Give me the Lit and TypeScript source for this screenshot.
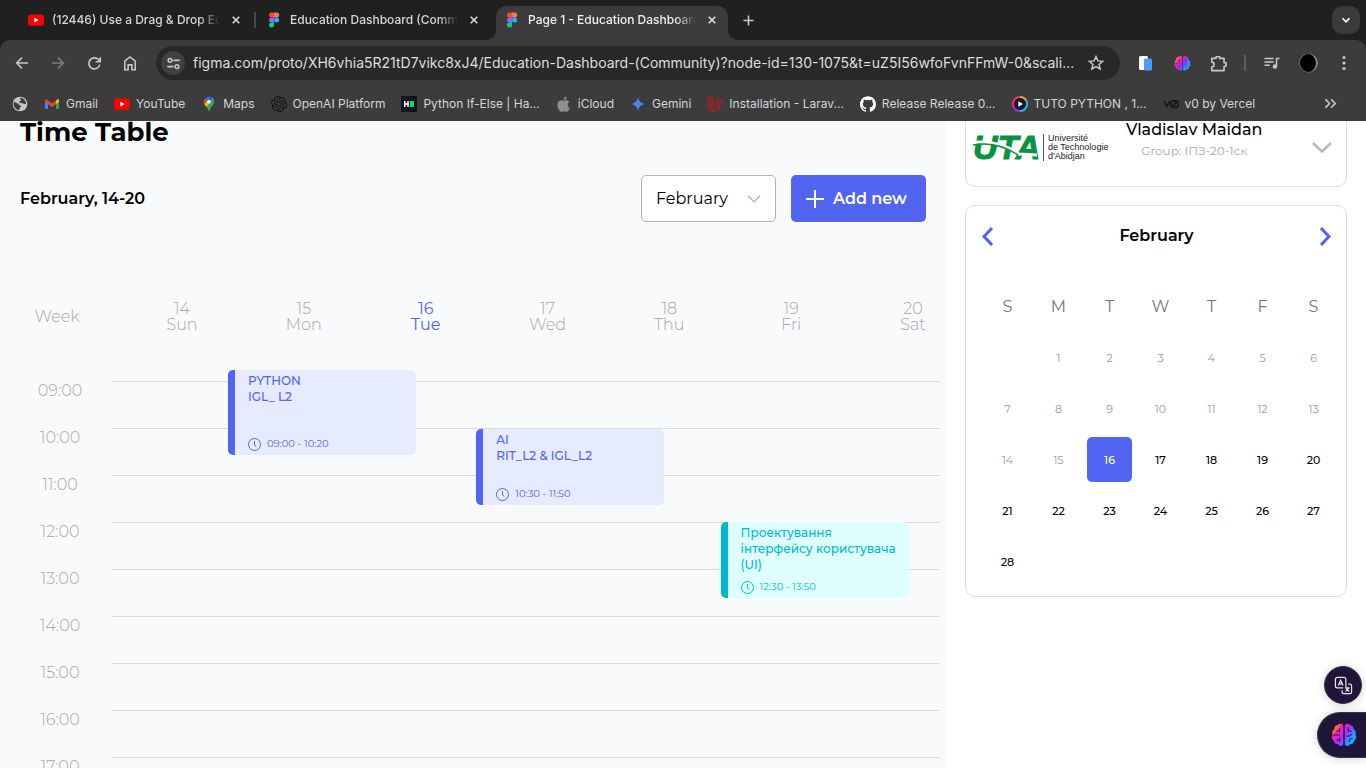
import { LitElement, html, svg, css, nothing } from "lit";
import { customElement, state } from "lit/decorators.js";
import { classMap } from "lit/directives/class-map.js";
import { styleMap } from "lit/directives/style-map.js";

const youtube = html`<svg viewBox="0 0 16 16" width="16" height="16" aria-hidden="true"><rect y="2.4" width="16" height="11.4" rx="2.6" fill="#f00"/><path d="M6.4 5.7v4.7L10.6 8z" fill="#fff"/></svg>`;
const figma = html`<svg viewBox="0 0 16 16" width="16" height="16" aria-hidden="true"><path d="M5.5.6H8v5H5.5a2.5 2.5 0 0 1 0-5z" fill="#f24e1e"/><path d="M8 .6h2.7a2.5 2.5 0 0 1 0 5H8z" fill="#ff7262"/><path d="M5.5 5.6H8v5H5.5a2.5 2.5 0 0 1 0-5z" fill="#a259ff"/><circle cx="10.6" cy="8.1" r="2.5" fill="#1abcfe"/><path d="M5.5 10.6H8v2.5a2.5 2.5 0 1 1-2.5-2.5z" fill="#0acf83"/></svg>`;
const globe = html`<svg viewBox="0 0 24 24" width="16" height="16" aria-hidden="true"><circle cx="12" cy="12" r="11" fill="#c4c7cb"/><path d="M3 8.500c2 .2 2.800 2 5 2.300s2 2.500 4 3.200 1.500 2.500.2 3.500-.5 3-2 4A10 10 0 0 1 3 8.500zM12 2.500c-.5 2.500 2 2.500 1.500 4.300s-3 .8-3 2.600 3.500.9 5 1.600 3.500 2 5.500.8A9.500 9.500 0 0 0 12 2.500z" fill="#3c3c3c"/></svg>`;
const gmail = html`<svg viewBox="0 0 16 16" width="16" height="16" aria-hidden="true"><path d="M1 5v8h3V7z" fill="#4285f4"/><path d="M15 5v8h-3V7z" fill="#34a853"/><path d="M12 4.500 14 3c.5-.2 1 .2 1 1v2l-3 2.300z" fill="#fbbc04"/><path d="M1 6V4c0-.8.7-1.200 1.300-.8L8 7.300l4-3v4L8 11 4 8.200z" fill="#ea4335"/></svg>`;
const maps = html`<svg viewBox="0 0 16 16" width="16" height="16" aria-hidden="true"><path d="M8 .5a5.200 5.200 0 0 0-4 1.900l3 2.600L11 1.400A5.200 5.200 0 0 0 8 .5z" fill="#1a73e8"/><path d="M4 2.400a5.200 5.200 0 0 0-.7 5.600L6.900 5z" fill="#ea4335"/><path d="M11 1.300c1 .6 1.700 1.500 2 2.600L7 11 3.900 8.900 9.500 5z" fill="#4285f4"/><path d="M3.300 8c.5 1 1.300 1.900 2 2.900L9.700 6 6.500 4.900z" fill="#fbbc04"/><path d="M13 3.900c.6 2 .1 3.600-1.100 5.200-1.400 1.900-2.700 3-3.200 5.500-.2 1.100-1 1.100-1.300 0-.3-1.400-1-2.500-2.100-3.700z" fill="#34a853"/><circle cx="8" cy="5.600" r="1.900" fill="#fff"/></svg>`;
const openai = html`<svg viewBox="0 0 24 24" width="16" height="16" aria-hidden="true"><path fill="#141414" d="M22.282 9.821a5.985 5.985 0 0 0-.516-4.911 6.046 6.046 0 0 0-6.510-2.900A6.065 6.065 0 0 0 4.981 4.182a5.985 5.985 0 0 0-3.998 2.900 6.046 6.046 0 0 0 .743 7.097 5.980 5.980 0 0 0 .511 4.911 6.051 6.051 0 0 0 6.515 2.900A5.985 5.985 0 0 0 13.260 24a6.056 6.056 0 0 0 5.772-4.206 5.989 5.989 0 0 0 3.998-2.900 6.056 6.056 0 0 0-.748-7.073zm-9.022 12.608a4.476 4.476 0 0 1-2.876-1.041l.142-.080 4.778-2.758a.795.795 0 0 0 .393-.681v-6.737l2.020 1.169a.071.071 0 0 1 .038.052v5.583a4.504 4.504 0 0 1-4.495 4.494zm-9.661-4.125a4.471 4.471 0 0 1-.535-3.014l.142.085 4.783 2.758a.771.771 0 0 0 .781 0l5.843-3.369v2.332a.080.080 0 0 1-.033.062L9.740 19.950a4.499 4.499 0 0 1-6.141-1.646zM2.341 7.896a4.485 4.485 0 0 1 2.366-1.973V11.600a.766.766 0 0 0 .388.677l5.814 3.354-2.020 1.169a.076.076 0 0 1-.071 0l-4.830-2.787A4.504 4.504 0 0 1 2.341 7.872zm16.596 3.856L13.104 8.364 15.119 7.200a.076.076 0 0 1 .071 0l4.830 2.791a4.494 4.494 0 0 1-.677 8.104v-5.677a.790.790 0 0 0-.407-.667zm2.011-3.023l-.142-.085-4.774-2.782a.776.776 0 0 0-.785 0L9.409 9.230V6.897a.066.066 0 0 1 .028-.062l4.830-2.787a4.499 4.499 0 0 1 6.680 4.660zM8.307 12.863l-2.020-1.164a.080.080 0 0 1-.038-.057V6.074a4.499 4.499 0 0 1 7.376-3.454l-.142.081L8.704 5.459a.795.795 0 0 0-.393.681zm1.098-2.365l2.602-1.500 2.607 1.500v2.999l-2.597 1.500-2.607-1.500z"/></svg>`;
const hacker = html`<svg viewBox="0 0 16 16" width="16" height="16" aria-hidden="true"><rect width="16" height="16" fill="#0b141f"/><path d="M3 5h1.500v2.200h1.800V5h1.500v6H6.300V8.700H4.500V11H3z" fill="#fff"/><rect x="9" y="5" width="4" height="6" fill="#05e05a"/></svg>`;
const apple = html`<svg viewBox="0 0 24 24" width="16" height="16" aria-hidden="true"><path transform="translate(0 1) scale(.95)" fill="#8e8e90" d="M12.152 6.896c-.948 0-2.415-1.078-3.960-1.040-2.040.027-3.910 1.183-4.961 3.014-2.117 3.675-.546 9.103 1.519 12.090 1.013 1.454 2.208 3.090 3.792 3.039 1.520-.065 2.090-.987 3.935-.987 1.831 0 2.350.987 3.960.948 1.637-.026 2.676-1.480 3.676-2.948 1.156-1.688 1.636-3.325 1.662-3.415-.039-.013-3.182-1.221-3.220-4.857-.026-3.040 2.480-4.494 2.597-4.559-1.429-2.090-3.623-2.324-4.390-2.376-2-.156-3.675 1.090-4.610 1.090zM15.530 3.830c.843-1.012 1.400-2.427 1.245-3.830-1.207.052-2.662.805-3.532 1.818-.780.896-1.454 2.338-1.273 3.714 1.338.104 2.715-.688 3.559-1.701"/></svg>`;
const gemini = html`<svg viewBox="0 0 16 16" width="16" height="16" aria-hidden="true"><defs><linearGradient id="g" x1="0" x2="1"><stop offset="0" stop-color="#9a76dd"/><stop offset=".5" stop-color="#3f86ea"/><stop offset="1" stop-color="#2ba6f7"/></linearGradient></defs><path d="M8 1c.8 4.200 2.800 6.200 7 7-4.200.8-6.200 2.800-7 7-.8-4.200-2.800-6.200-7-7 4.200-.8 6.200-2.800 7-7z" fill="url(#g)"/></svg>`;
const laravel = html`<svg viewBox="0 0 16 16" width="16" height="16" fill="none" stroke="#d0161b" stroke-width=".9" stroke-linejoin="round" aria-hidden="true"><path d="M.6 2.200 3.200.8l2.600 1.400v6.700l3-1.700V4.400l3.200-1.700 3.300 1.700v3.200l-3.200 1.800v3.300l-5.800 3-5.700-3zM.6 2.200l2.600 1.500 2.600-1.500M3.200 3.700v7.500l3.100 1.700 5.800-3.500-3.300-2.200M3.200 11.200l2.600-2.300M6.300 12.900v2.800M8.800 4.400l3.300 1.900 3.200-1.900M12.100 6.300v3.100"/></svg>`;
const github = html`<svg viewBox="0 0 24 24" width="16" height="16" aria-hidden="true"><path fill="#fff" d="M12 .297c-6.630 0-12 5.373-12 12 0 5.303 3.438 9.800 8.205 11.385.600.113.820-.258.820-.577 0-.285-.010-1.040-.015-2.040-3.338.724-4.042-1.610-4.042-1.610C4.422 18.070 3.633 17.700 3.633 17.700c-1.087-.744.084-.729.084-.729 1.205.084 1.838 1.236 1.838 1.236 1.070 1.835 2.809 1.305 3.495.998.108-.776.417-1.305.760-1.605-2.665-.300-5.466-1.332-5.466-5.930 0-1.310.465-2.380 1.235-3.220-.135-.303-.540-1.523.105-3.176 0 0 1.005-.322 3.300 1.230.960-.267 1.980-.399 3-.405 1.020.006 2.040.138 3 .405 2.280-1.552 3.285-1.230 3.285-1.230.645 1.653.240 2.873.120 3.176.765.840 1.230 1.910 1.230 3.220 0 4.610-2.805 5.625-5.475 5.920.420.360.810 1.096.810 2.220 0 1.606-.015 2.896-.015 3.286 0 .315.210.690.825.570C20.565 22.092 24 17.592 24 12.297c0-6.627-5.373-12-12-12"/></svg>`;
const tuto = html`<svg viewBox="0 0 16 16" width="16" height="16" fill="none" stroke-width="2" aria-hidden="true"><circle cx="8" cy="8" r="7" fill="#0e1a2b"/><path d="M8 1a7 7 0 0 1 6.100 3.500" stroke="#ff9a3c"/><path d="M14.100 4.500A7 7 0 0 1 8 15" stroke="#22b8e8"/><path d="M8 15a7 7 0 0 1-6.100-3.500" stroke="#9b30f0"/><path d="M1.900 11.500A7 7 0 0 1 8 1" stroke="#f7335f"/><path d="M6.300 5.200v5.600L11 8z" fill="#fff"/></svg>`;
const vzero = html`<svg viewBox="0 0 16 16" width="16" height="16" fill="none" stroke="#1b1b1b" stroke-width="1.900" aria-hidden="true"><path d="M.8 5l3.200 5.500L6.600 5"/><rect x="8" y="5" width="7" height="6.400" rx="2.400"/><path d="M9 11l5-5.500"/></svg>`;

const brain = (size: number, ink: string) => html`<svg viewBox="0 0 24 24" width=${size} height=${size} aria-hidden="true">
  <defs><linearGradient id="b" x1="0" y1="0" x2="1" y2=".7"><stop offset=".12" stop-color="#ffa000"/><stop offset=".32" stop-color="#ff1fa8"/><stop offset=".55" stop-color="#b026ff"/><stop offset=".9" stop-color="#16a8ff"/></linearGradient></defs>
  <path fill="url(#b)" d="M11.300 3.200C10.400 1 7.300 1 6.200 2.900 4 2.900 2.800 4.800 3.200 6.700 1 7.800.6 10.200 1.400 11.700c-1.100 2-.6 4.300 1.200 5.400.2 2.500 2.100 3.800 4 3.500 1.100 2.100 4 1.900 4.700-.1zM12.700 3.200c.9-2.200 4-2.200 5.100-.3 2.200 0 3.400 1.900 3 3.800 2.200 1.100 2.600 3.500 1.800 5 1.100 2 .6 4.300-1.200 5.400-.2 2.500-2.100 3.800-4 3.500-1.100 2.100-4 1.900-4.700-.1z"/>
  <path fill="none" stroke=${ink} stroke-width=".9" d="M2 12h6M8 9.500V5.800M5 16.500h3.500M8 14.500v4M16 5v3.500h3M14 13h3l2.500-2M17 18.500v-2.500l3-1M5 8.500h3"/></svg>`;

const line = (body: unknown, size = 18, width = 2) =>
  html`<svg viewBox="0 0 24 24" width=${size} height=${size} fill="none" stroke="currentColor" stroke-width=${width} aria-hidden="true">${body}</svg>`;

const TABS = [
  { icon: youtube, title: "(12446) Use a Drag & Drop Editor", active: false },
  { icon: figma, title: "Education Dashboard (Community)", active: false },
  { icon: figma, title: "Page 1 - Education Dashboard", active: true },
];

const BOOKMARKS = [
  { icon: gmail, label: "Gmail" },
  { icon: youtube, label: "YouTube" },
  { icon: maps, label: "Maps" },
  { icon: openai, label: "OpenAI Platform" },
  { icon: hacker, label: "Python If-Else | Ha..." },
  { icon: apple, label: "iCloud" },
  { icon: gemini, label: "Gemini" },
  { icon: laravel, label: "Installation - Larav..." },
  { icon: github, label: "Release Release 0..." },
  { icon: tuto, label: "TUTO PYTHON , 1..." },
  { icon: vzero, label: "v0 by Vercel" },
];

@customElement("browser-bar")
export class BrowserBar extends LitElement {
  static styles = css`
    :host { display: block; font: 500 12px/16px Inter, "Noto Sans", sans-serif; color: #d6d6d6; background: #1f2121; }
    button { display: grid; place-items: center; padding: 0; border: 0; background: none; color: #c7c7c7; font: inherit; }
    svg { display: block; flex: none; }
    .tabs { display: flex; align-items: stretch; gap: 6px; height: 34px; padding: 6px 6px 0 20px; }
    .tab { position: relative; display: flex; align-items: center; gap: 8px; width: 232px; padding: 0 8px 6px; box-sizing: border-box; }
    .tab.split::after { content: ""; position: absolute; right: -4px; top: 6px; width: 2px; height: 16px; background: #45494a; }
    .tab.active { background: #3c3c3c; border-radius: 10px 10px 0 0; color: #f0f0f0; }
    .tab.active::before, .tab.active::after { content: ""; position: absolute; bottom: 0; width: 10px; height: 10px; }
    .tab.active::before { right: 100%; background: radial-gradient(circle at 0 0, transparent 10px, #3c3c3c 10px); }
    .tab.active::after { left: 100%; background: radial-gradient(circle at 100% 0, transparent 10px, #3c3c3c 10px); }
    .title { flex: 1; overflow: hidden; white-space: nowrap; mask-image: linear-gradient(90deg, #000 148px, transparent); }
    .close { width: 16px; height: 16px; color: #e3e3e3; }
    .new { width: 28px; height: 28px; }
    .spacer { flex: 1; }
    .down { width: 28px; height: 28px; border-radius: 10px; background: #3a3b3c; color: #fff; }
    .toolbar { display: flex; align-items: center; gap: 8px; height: 46px; padding: 0 8px; background: #3c3c3c; border-radius: 10px 10px 0 0; }
    .tool { width: 28px; height: 28px; flex: none; }
    .off { color: #7e7e7e; }
    .address { display: flex; align-items: center; flex: 1; gap: 8px; min-width: 0; height: 34px; margin: 0 4px; padding: 0 10px 0 5px; box-sizing: border-box; border-radius: 17px; background: #282828; }
    .site { width: 24px; height: 24px; border-radius: 12px; background: #3f4040; flex: none; }
    .url { flex: 1; min-width: 0; padding: 0; border: 0; outline: 0; background: none; color: #dedede; font: 400 14px/20px Inter, sans-serif; }
    .rule { width: 2px; height: 16px; margin: 0 4px; background: #5c5c5c; }
    .avatar { width: 20px; height: 20px; border-radius: 10px; background: #000; box-shadow: inset 1px 0 0 1px #55554f, inset -2px 0 0 0 #8d8d85; }
    .marks { display: flex; align-items: center; gap: 16px; height: 35px; padding: 0 28px 0 12px; background: #3c3c3c; white-space: nowrap; font-weight: 400; }
    .mark { display: flex; align-items: center; gap: 6px; color: inherit; text-decoration: none; }
  `;

  render() {
    return html`
      <nav class="tabs" aria-label="Tabs">
        ${TABS.map((t, i) => html`<div class=${classMap({ tab: true, active: t.active, split: i === 0 })}>
          ${t.icon}<span class="title">${t.title}</span>
          <button class="close" aria-label="Close tab">${line(svg`<path d="M5.500 5.500l13 13M18.500 5.500l-13 13"/>`, 12, 3)}</button>
        </div>`)}
        <button class="new" aria-label="New tab">${line(svg`<path d="M12 4v16M4 12h16"/>`, 15, 2.6)}</button>
        <span class="spacer"></span>
        <button class="down" aria-label="Search tabs">${line(svg`<path d="M6 9l6 6 6-6"/>`, 14, 3)}</button>
      </nav>
      <div class="toolbar">
        <button class="tool" aria-label="Back">${line(svg`<path d="M21 12H4M12 4l-8 8 8 8"/>`, 16, 2.4)}</button>
        <button class="tool off" aria-label="Forward">${line(svg`<path d="M3 12h17M12 4l8 8-8 8"/>`, 16, 2.4)}</button>
        <button class="tool" aria-label="Reload">${line(svg`<path d="M19.500 13.500A7.800 7.800 0 1 1 17.500 6.500l2 2.300M20 3v6.500h-6.500"/>`, 17, 2.4)}</button>
        <button class="tool" aria-label="Home">${line(svg`<path d="M5 21V9.500L12 4l7 5.500V21h-4.500v-6.500h-5V21z"/>`, 18, 2.1)}</button>
        <div class="address">
          <button class="site" aria-label="Site information">${line(svg`<circle cx="6.500" cy="7" r="3"/><path d="M12 7h10M2 17h10"/><circle cx="17.500" cy="17" r="3"/>`, 15, 2.6)}</button>
          <input class="url" aria-label="Address" value="figma.com/proto/XH6vhia5R21tD7vikc8xJ4/Education-Dashboard-(Community)?node-id=130-1075&t=uZ5I56wfoFvnFFmW-0&scali...">
          <button class="tool" aria-label="Bookmark this page">${line(svg`<path d="M12 3.500l2.600 5.700 6.200.6-4.700 4.100 1.400 6.100L12 16.800 6.500 20l1.400-6.100-4.700-4.100 6.200-.6z"/>`, 18, 2)}</button>
        </div>
        <button class="tool" aria-label="Clipboard"><svg viewBox="0 0 18 18" width="18" height="18"><rect x="2" y="2" width="9" height="14" rx="1.500" fill="#fff"/><rect x="7" y="4.500" width="8" height="12" rx="1.500" fill="#4c9bff"/></svg></button>
        <button class="tool" aria-label="Assistant">${brain(17, "#5a2a78")}</button>
        <button class="tool" aria-label="Extensions">${line(svg`<path d="M3.500 5.500H9V3.500h4.500v2H19V11h2.500v4.500H19V21H3.500v-4.700a2.700 2.700 0 0 0 0-6z" stroke-linejoin="round"/>`, 19, 2)}</button>
        <span class="rule"></span>
        <button class="tool" aria-label="Media">${line(svg`<path d="M2 6h12M2 10.500h12M2 15h7M22 6h-4v10.500"/><circle cx="15.800" cy="16.800" r="2" fill="currentColor"/>`, 18, 2)}</button>
        <button class="tool" aria-label="Profile"><span class="avatar"></span></button>
        <button class="tool" aria-label="Menu"><svg viewBox="0 0 18 18" width="18" height="18" fill="currentColor"><circle cx="9" cy="3.500" r="1.600"/><circle cx="9" cy="9" r="1.600"/><circle cx="9" cy="14.500" r="1.600"/></svg></button>
      </div>
      <nav class="marks" aria-label="Bookmarks">
        <a class="mark" href="#" aria-label="Web">${globe}</a>
        ${BOOKMARKS.map((b) => html`<a class="mark" href="#">${b.icon}<span>${b.label}</span></a>`)}
        <span class="spacer"></span>
        <button aria-label="More bookmarks">${line(svg`<path d="M4 5.500l6.500 6.500L4 18.500M13 5.500l6.500 6.500-6.500 6.500"/>`, 15, 2.6)}</button>
      </nav>`;
  }
}

const DAYS = [
  [14, "Sun"], [15, "Mon"], [16, "Tue"], [17, "Wed"], [18, "Thu"], [19, "Fri"], [20, "Sat"],
] as const;
const HOURS = ["09:00", "10:00", "11:00", "12:00", "13:00", "14:00", "15:00", "16:00", "17:00"];
const EVENTS = [
  { lines: ["PYTHON", "IGL_ L2"], time: "09:00 - 10:20", left: 14, top: 4, height: 85, teal: false },
  { lines: ["AI", "RIT_L2 & IGL_L2"], time: "10:30 - 11:50", left: 44, top: 63, height: 76, teal: false },
  { lines: ["Проектування", "інтерфейсу користувача", "(UI)"], time: "12:30 - 13:50", left: 73.5, top: 156, height: 76, teal: true },
];

@customElement("time-table")
export class TimeTable extends LitElement {
  static styles = css`
    :host { display: block; background: #f9fafc; overflow: hidden; }
    h1 { margin: 0; padding: 0 20px; font-size: 26px; line-height: 22px; font-weight: 700; }
    .bar { display: flex; align-items: center; gap: 15px; margin-top: 32px; padding: 0 20px; }
    h2 { flex: 1; margin: 0; font-size: 16px; font-weight: 600; line-height: 20px; }
    .picker { display: grid; align-items: center; width: 135px; height: 47px; box-sizing: border-box; border: 1px solid #b4b4b4; border-radius: 5px; background: #fff; }
    .picker > * { grid-area: 1 / 1; }
    select { appearance: none; width: 100%; height: 100%; padding: 0 14px; border: 0; background: none; font: inherit; font-size: 16px; color: #000; }
    .picker svg { justify-self: end; margin-right: 14px; color: #b4b4b4; pointer-events: none; }
    .add { display: flex; align-items: center; gap: 9px; width: 135px; height: 47px; padding: 0 15px; border: 0; border-radius: 5px; background: #5165f2; color: #fff; font: inherit; font-size: 16px; font-weight: 600; white-space: nowrap; }
    .head { display: flex; align-items: center; margin-top: 79px; padding-right: 13px; color: #a8a8a8; font-size: 16px; line-height: 16px; font-weight: 300; text-align: center; }
    .week { width: 114px; margin-right: 48px; }
    .days { display: flex; flex: 1; justify-content: space-between; }
    .day { width: 40px; }
    .today { color: #5165f2; font-weight: 400; }
    .grid { display: grid; grid-template-columns: 112px 1fr; margin-top: 33px; padding-right: 6px; }
    .hour { height: 47px; padding-left: 8px; line-height: 49px; font-size: 16px; font-weight: 300; text-align: center; color: #a8a8a8; }
    .canvas { position: relative; padding-top: 15px; }
    .slot { height: 47px; box-sizing: border-box; border-top: 1px solid #d9dadc; }
    .event { position: absolute; display: flex; flex-direction: column; justify-content: space-between; width: 22.7%; box-sizing: border-box; padding: 3px 4px 4px 13px; border-left: 7px solid #5165f2; border-radius: 5px; background: #e7ebff; color: #5165f2; }
    .event.teal { border-color: #00b6d1; background: #dfffff; color: #00b9d2; }
    .name { font-size: 12px; line-height: 16px; font-weight: 500; white-space: nowrap; }
    .time { display: flex; align-items: center; gap: 6px; font-size: 10px; line-height: 14px; }
  `;

  render() {
    return html`
      <h1>Time Table</h1>
      <div class="bar">
        <h2>February, 14-20</h2>
        <div class="picker">
          <select aria-label="Month"><option>February</option></select>
          <svg width="14" height="8" viewBox="0 0 14 8" fill="none" stroke="currentColor" stroke-width="1.500"><path d="M1 .8l6 6 6-6"/></svg>
        </div>
        <button class="add"><svg width="18" height="18" viewBox="0 0 18 18" stroke="#fff" stroke-width="2"><path d="M9 0v18M0 9h18"/></svg>Add new</button>
      </div>
      <div class="head">
        <span class="week">Week</span>
        <div class="days">
          ${DAYS.map(([n, d]) => html`<span class=${classMap({ day: true, today: n === 16 })}>${n}<br>${d}</span>`)}
        </div>
      </div>
      <div class="grid">
        <div>${HOURS.map((h) => html`<div class="hour">${h}</div>`)}</div>
        <div class="canvas">
          ${HOURS.map(() => html`<div class="slot"></div>`)}
          ${EVENTS.map((e) => html`<article class=${classMap({ event: true, teal: e.teal })}
            style=${styleMap({ left: `${e.left}%`, top: `${e.top}px`, height: `${e.height}px` })}>
            <div class="name">${e.lines.map((l) => html`<div>${l}</div>`)}</div>
            <div class="time"><svg width="13" height="13" viewBox="0 0 13 13" fill="none" stroke="currentColor"><circle cx="6.500" cy="6.500" r="6"/><path d="M6.500 3v4l1.800 1.400"/></svg>${e.time}</div>
          </article>`)}
        </div>
      </div>`;
  }
}

const WEEKS = [
  [0, 1, 2, 3, 4, 5, 6],
  [7, 8, 9, 10, 11, 12, 13],
  [14, 15, 16, 17, 18, 19, 20],
  [21, 22, 23, 24, 25, 26, 27],
  [28, 0, 0, 0, 0, 0, 0],
];

@customElement("side-panel")
export class SidePanel extends LitElement {
  @state() private selected = 16;

  static styles = css`
    :host { display: block; background: #fff; padding: 0 19px; }
    button { padding: 0; border: 0; background: none; font: inherit; color: inherit; }
    svg { display: block; }
    .user { display: flex; align-items: flex-start; height: 66px; box-sizing: border-box; padding: 0 14px 0 7px; border: 1px solid #dedede; border-top: 0; border-radius: 0 0 10px 10px; }
    .logo { display: flex; align-items: center; gap: 2px; margin-top: 12px; }
    .mark { display: grid; width: 68px; height: 28px; color: #08923f; font: italic 700 34px/28px "Liberation Sans", sans-serif; -webkit-text-stroke: 1px #08923f; }
    .mark > * { grid-area: 1 / 1; }
    .school { padding-left: 4px; border-left: 1px solid #555; color: #222; font: 9px/9px "Liberation Sans", sans-serif; white-space: nowrap; }
    .who { flex: 1; padding-right: 32px; text-align: center; }
    .full { font-size: 16px; line-height: 18px; font-weight: 500; }
    .group { font-size: 12px; line-height: 16px; margin-top: 4px; color: #a8a8a8; }
    .more { margin-top: 21px; color: #b9b9b9; }
    .calendar { margin-top: 18px; padding: 15px 7px 9px 16px; border: 1px solid #dedede; border-radius: 10px; }
    .top { display: flex; align-items: center; justify-content: space-between; height: 30px; margin-bottom: 30px; padding-right: 8px; color: #5165f2; }
    h3 { margin: 0; color: #000; font-size: 16px; font-weight: 600; line-height: 20px; }
    table { width: 100%; table-layout: fixed; border-collapse: collapse; }
    th, td { height: 51px; padding: 0; text-align: center; }
    th { font-size: 16px; font-weight: 400; color: #757575; }
    .date { width: 45px; height: 45px; border-radius: 5px; font-size: 11px; font-weight: 500; line-height: 16px; vertical-align: middle; }
    .past { color: #9c9c9c; font-weight: 400; }
    .on { background: #5165f2; color: #fff; }
  `;

  render() {
    return html`
      <section class="user">
        <div class="logo">
          <div class="mark"><span>UTA</span>
            <svg width="68" height="28" viewBox="0 0 68 28" fill="none" overflow="visible"><path d="M-4 10c18-3 36 1 50 11l18 1" stroke="#fff" stroke-width="3"/><path d="M0 12c16-3 32 1 45 10" stroke="#08923f" stroke-width="1.500"/></svg>
          </div>
          <div class="school">Université<br>de Technologie<br>d'Abidjan</div>
        </div>
        <div class="who"><div class="full">Vladislav Maidan</div><div class="group">Group: ІПЗ-20-1ск</div></div>
        <button class="more" aria-label="Account menu"><svg width="20" height="11" viewBox="0 0 20 11" fill="none" stroke="currentColor" stroke-width="2.500"><path d="M1 1l9 8.500L19 1"/></svg></button>
      </section>
      <section class="calendar">
        <div class="top">
          <button aria-label="Previous month"><svg width="11" height="19" viewBox="0 0 11 19" fill="none" stroke="currentColor" stroke-width="3"><path d="M10 1L2 9.500 10 18"/></svg></button>
          <h3>February</h3>
          <button aria-label="Next month"><svg width="11" height="19" viewBox="0 0 11 19" fill="none" stroke="currentColor" stroke-width="3"><path d="M1 1l8 8.500L1 18"/></svg></button>
        </div>
        <table>
          <thead><tr>${["S", "M", "T", "W", "T", "F", "S"].map((d) => html`<th scope="col">${d}</th>`)}</tr></thead>
          <tbody>${WEEKS.map((w) => html`<tr>${w.map((d) => html`<td>${d
            ? html`<button class=${classMap({ date: true, past: d < 16, on: d === this.selected })} @click=${() => (this.selected = d)}>${d}</button>`
            : nothing}</td>`)}</tr>`)}</tbody>
        </table>
      </section>`;
  }
}

@customElement("app-root")
export class AppRoot extends LitElement {
  static styles = css`
    :host { display: flex; flex-direction: column; height: 100vh; overflow: hidden; background: #fff; color: #000; font-family: Montserrat, Inter, "Noto Sans", sans-serif; }
    main { display: grid; grid-template-columns: 1fr 420px; flex: 1; min-height: 0; }
    .float { position: fixed; right: 0; display: grid; place-items: center; padding: 0; border: 1px solid #3a3740; background: #1f1538; box-shadow: 0 1px 10px rgba(0, 0, 0, .18); box-sizing: border-box; }
    .translate { right: 4px; bottom: 64px; width: 38px; height: 38px; border-radius: 19px; }
    .assist { bottom: 10px; width: 49px; height: 46px; border-radius: 23px 0 0 23px; border-right: 0; padding-left: 4px; }
  `;

  render() {
    return html`
      <browser-bar></browser-bar>
      <main><time-table></time-table><side-panel></side-panel></main>
      <button class="float translate" aria-label="Translate"><svg width="19" height="19" viewBox="0 0 20 20" fill="none" stroke="#e6e3ee" stroke-width="1.300"><path d="M12.500 11.500V3.500a2 2 0 0 0-2-2h-7a2 2 0 0 0-2 2v7a2 2 0 0 0 2 2h6M15 8.500h1.500a2 2 0 0 1 2 2v6a2 2 0 0 1-2 2h-6a2 2 0 0 1-2-2V15M4.500 10L7 4.500 9.500 10M5.300 8.300h3.400M11.500 12.500h5M15.500 12.500c-.6 2-2 3.200-3.700 3.800M12.800 13.500l3.200 2.800"/></svg></button>
      <button class="float assist" aria-label="Assistant">${brain(26, "#1f1538")}</button>`;
  }
}
